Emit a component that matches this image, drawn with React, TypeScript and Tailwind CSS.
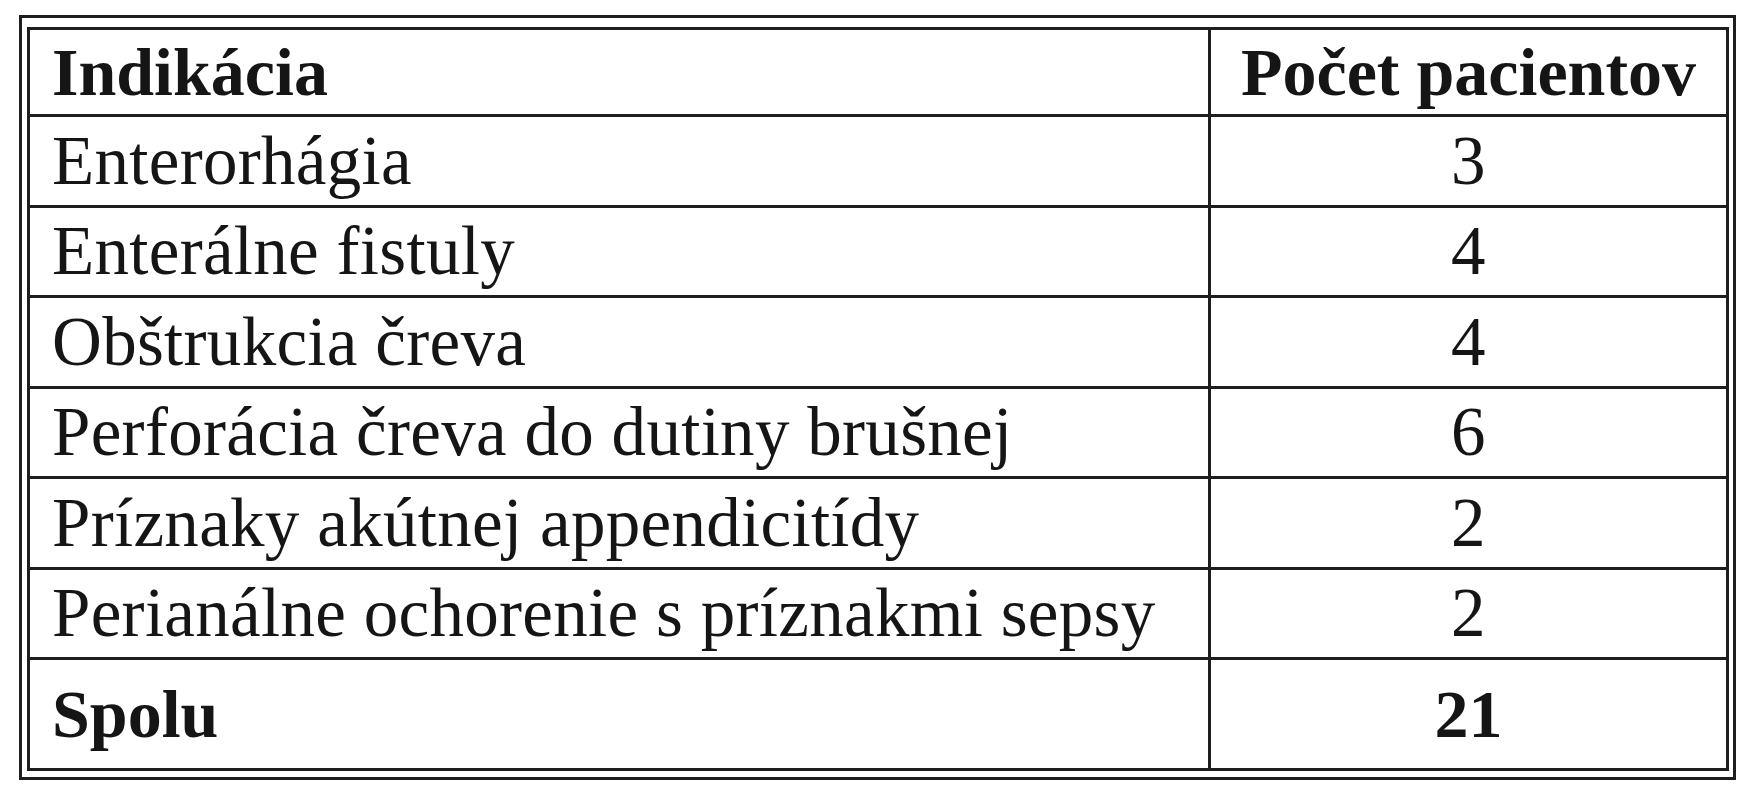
import React from "react";

const rows: [string, string][] = [
  ["Enterorhágia", "3"],
  ["Enterálne fistuly", "4"],
  ["Obštrukcia čreva", "4"],
  ["Perforácia čreva do dutiny brušnej", "6"],
  ["Príznaky akútnej appendicitídy", "2"],
  ["Perianálne ochorenie s príznakmi sepsy", "2"],
];

export default function App() {
  return (
    <div className="bg-white w-[1755px] h-[800px] pt-[15px] pl-[19px] font-['Liberation_Serif',serif] text-[#151515]">
      <div className="w-[1717px] border-[3px] border-[#1e1e1e] pt-[9px] pl-[5px] pr-[4px] pb-[6px]">
        <div className="border-[3px] border-[#1e1e1e]">
          <div className="grid grid-cols-[1181px_1fr] h-[87px] border-b-[3px] border-[#1e1e1e] font-bold text-[68px] leading-[78px]">
            <div className="border-r-[3px] border-[#1e1e1e] pl-[22px] flex items-center">Indikácia</div>
            <div className="flex items-center justify-center">Počet pacientov</div>
          </div>
          {rows.map(([label, n], i) => (
            <div
              key={i}
              className="grid grid-cols-[1181px_1fr] h-[90.5px] border-b-[3px] border-[#1e1e1e] text-[69px] leading-[78px] tracking-[0.3px]"
            >
              <div className="border-r-[3px] border-[#1e1e1e] pl-[22px] flex items-center">{label}</div>
              <div className="flex items-center justify-center">{n}</div>
            </div>
          ))}
          <div className="grid grid-cols-[1181px_1fr] h-[108px] font-bold text-[68px] leading-[78px]">
            <div className="border-r-[3px] border-[#1e1e1e] pl-[22px] flex items-center">Spolu</div>
            <div className="flex items-center justify-center">21</div>
          </div>
        </div>
      </div>
    </div>
  );
}
